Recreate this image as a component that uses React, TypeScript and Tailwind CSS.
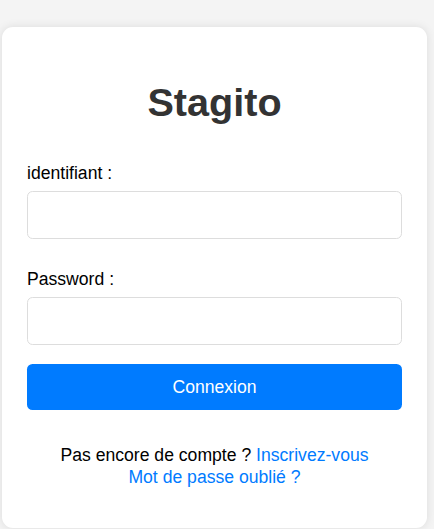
export default function App() {
  return (
    <main className="min-h-screen bg-[#f4f4f4] pt-[27px] pl-[2px] font-['Liberation_Sans',Arial,sans-serif]">
      <div className="w-[425px] h-[501px] bg-white rounded-[11px] shadow-[0_0_10px_rgba(0,0,0,0.1)] px-[25px] pt-[52px] flex flex-col">
        <h1 className="text-center text-[39.6px] leading-[46px] font-bold text-[#333]">Stagito</h1>

        <form className="flex flex-col mt-[38px]" onSubmit={(e) => e.preventDefault()}>
          <label htmlFor="identifiant" className="text-[17.6px] leading-[20px] text-black">
            identifiant :
          </label>
          <input
            id="identifiant"
            type="text"
            className="mt-[8px] h-[48px] w-full border border-[#ddd] rounded-[5.5px] px-[11px] text-[17.6px] outline-none"
          />

          <label htmlFor="password" className="mt-[30px] text-[17.6px] leading-[20px] text-black">
            Password :
          </label>
          <input
            id="password"
            type="password"
            className="mt-[8px] h-[48px] w-full border border-[#ddd] rounded-[5.5px] px-[11px] text-[17.6px] outline-none"
          />

          <button
            type="submit"
            className="mt-[19px] h-[46px] w-full bg-[#007bff] text-white text-[17.6px] rounded-[5.5px]"
          >
            Connexion
          </button>
        </form>

        <div className="mt-[35px] text-center text-[17.6px] leading-[21.6px] text-black">
          <p>
            Pas encore de compte ? <a href="#" className="text-[#007bff]">Inscrivez-vous</a>
          </p>
          <p>
            <a href="#" className="text-[#007bff]">Mot de passe oublié ?</a>
          </p>
        </div>
      </div>
    </main>
  );
}
